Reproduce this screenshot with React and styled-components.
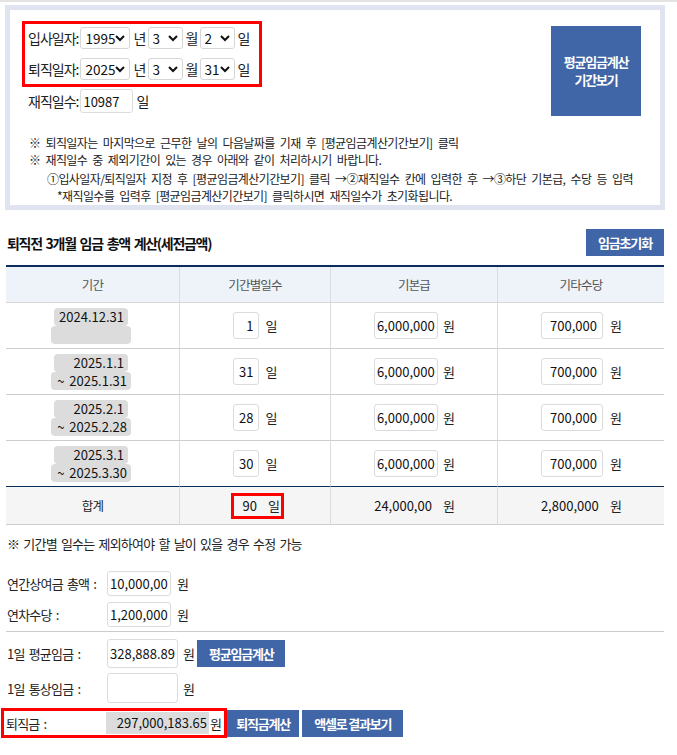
import React from "react";
import styled, { createGlobalStyle } from "styled-components";

const GlobalStyle = createGlobalStyle`
  body {
    margin: 0;
    background: #fff;
    color: #222;
    font-family: "Noto Sans CJK KR", "Noto Sans", sans-serif;
    font-size: 12px;
    letter-spacing: -0.8px;
    word-spacing: 2px;
  }
  input, select, button {
    font-family: inherit;
  }
`;

const Page = styled.div`
  width: 677px;
  box-sizing: border-box;
  border-top: 2px solid #e3e3e3;
  padding: 3px 13px 0 6px;
`;

const TopBox = styled.div`
  margin: 0 -1px;
  height: 205px;
  box-sizing: border-box;
  border: 5px solid #e0e4f1;
  padding: 11px 19px 0 12px;
  display: grid;
  grid-template-columns: 1fr auto;
  align-items: start;
`;

const LeftCol = styled.div`
  display: flex;
  flex-direction: column;
`;

const RedFrame = styled.div`
  align-self: flex-start;
  display: flex;
  flex-direction: column;
  gap: 9px;
  border: 3px solid #ff0000;
  padding: 3px 7px 4px 3px;
`;

const FormRow = styled.div`
  display: flex;
  align-items: center;
  height: ${(p) => p.$h || 22}px;
`;

const TopLabel = styled.span`
  font-size: 14px;
  letter-spacing: -1px;
  margin-right: 2px;
`;

const Unit = styled.span`
  font-size: 14px;
  margin: 0 2px 0 3px;
`;

const SelectWrap = styled.span`
  position: relative;
  display: inline-block;
`;

const Select = styled.select`
  appearance: none;
  width: ${(p) => p.$w}px;
  height: 22px;
  box-sizing: border-box;
  border: 1px solid #d6d6d6;
  border-radius: 3px;
  background: #fff;
  padding: 0 0 0 4px;
  font-size: 13.5px;
  letter-spacing: 0;
  color: #111;
`;

const Chevron = styled.svg`
  position: absolute;
  right: 5px;
  top: 8px;
  pointer-events: none;
`;

const StayRow = styled(FormRow)`
  margin-top: 2px;
  padding-left: 6px;
`;

const Input = styled.input`
  width: ${(p) => p.$w}px;
  height: ${(p) => p.$h || 27}px;
  box-sizing: border-box;
  border: 1px solid #dcdcdc;
  border-radius: 3px;
  background: #fff;
  padding: 0 ${(p) => (p.$right ? 5 : 2)}px 0 2px;
  text-align: ${(p) => (p.$right ? "right" : "left")};
  font-size: 13px;
  letter-spacing: 0;
  color: #111;
  outline: none;
`;

const BigButton = styled.button`
  width: 90px;
  height: 90px;
  margin-top: 5px;
  border: none;
  background: #4166a7;
  color: #fff;
  font-size: 13px;
  font-weight: 700;
  letter-spacing: -1.2px;
  line-height: 18px;
`;

const Notes = styled.div`
  grid-column: 1 / -1;
  margin-top: 16px;
  padding-left: 7px;
  font-size: 12px;
  letter-spacing: -0.6px;
  word-spacing: 3px;
  line-height: 17px;
`;

const NoteLine = styled.div`
  padding-left: ${(p) => p.$indent || 0}px;
  margin-top: ${(p) => p.$gap || 0}px;
  white-space: nowrap;
`;

const TitleRow = styled.div`
  margin-top: 19px;
  height: 27px;
  display: flex;
  align-items: center;
  justify-content: space-between;
`;

const Title = styled.h3`
  margin: 0 0 0 1px;
  font-size: 14px;
  font-weight: 700;
  letter-spacing: -1.3px;
  color: #111;
`;

const BlueButton = styled.button`
  height: 27px;
  width: ${(p) => p.$w}px;
  margin-left: ${(p) => p.$ml || 0}px;
  border: none;
  background: #4166a7;
  color: #fff;
  font-size: 13px;
  font-weight: 700;
  letter-spacing: -1.2px;
  padding: 0;
`;

const Table = styled.table`
  width: 658px;
  margin-top: 9px;
  table-layout: fixed;
  border-collapse: separate;
  border-spacing: 0;
  border-top: 2px solid #0b2d5b;
`;

const Th = styled.th`
  height: 35px;
  padding: 0;
  background: #eef2f9;
  color: #555;
  font-size: 12.5px;
  font-weight: 400;
  border-bottom: 1px solid #d8d8d8;
  border-left: ${(p) => (p.$first ? "none" : "1px solid #dcdcdc")};
`;

const Td = styled.td`
  height: ${(p) => (p.$total ? 37 : 45)}px;
  padding: 0;
  text-align: center;
  vertical-align: middle;
  background: ${(p) => (p.$total ? "#f5f5f5" : "#fff")};
  border-bottom: 1px solid ${(p) => (p.$navy ? "#0b2d5b" : "#cdcdcd")};
  border-left: ${(p) => (p.$first ? "none" : "1px solid #dcdcdc")};
  font-size: 12.5px;
`;

const PeriodStack = styled.div`
  display: flex;
  flex-direction: column;
  align-items: center;
  margin-left: -3px;
`;

const PeriodChip = styled.div`
  width: ${(p) => p.$w}px;
  height: 18px;
  box-sizing: border-box;
  background: #dcdcdc;
  border-radius: 4px;
  padding-right: 4px;
  text-align: right;
  font-size: 13px;
  letter-spacing: 0;
  line-height: 18px;
  color: #111;
`;

const CellGroup = styled.div`
  display: inline-flex;
  align-items: center;
`;

const CellUnit = styled.span`
  font-size: 13px;
  margin-left: ${(p) => p.$ml || 6}px;
`;

const TotalValue = styled.span`
  width: ${(p) => p.$w}px;
  box-sizing: border-box;
  padding-right: 6px;
  text-align: right;
  font-size: 13px;
  letter-spacing: 0;
  color: #111;
`;

const RedDays = styled.div`
  display: inline-flex;
  align-items: center;
  height: 26px;
  box-sizing: border-box;
  margin-left: 5px;
  border: 3px solid #ff0000;
  padding-right: 2px;
`;

const TableNote = styled.p`
  margin: 10px 0 0 1px;
  font-size: 13px;
  line-height: 18px;
`;

const Fields = styled.div`
  margin-top: 18px;
  display: flex;
  flex-direction: column;
  gap: ${(p) => p.$gap || 6}px;
`;

const FieldRow = styled.div`
  display: flex;
  align-items: center;
  height: ${(p) => p.$h || 25}px;
  padding-left: 1px;
`;

const FieldLabel = styled.span`
  width: 100px;
  flex: none;
  font-size: 13px;
`;

const FieldUnit = styled.span`
  font-size: 13px;
  margin-left: ${(p) => p.$ml || 6}px;
`;

const Divider = styled.hr`
  margin: 4px 0;
  border: none;
  border-top: 1px solid #cccccc;
`;

const RedWrap = styled.div`
  display: flex;
  align-items: center;
  height: 30px;
  box-sizing: border-box;
  margin-left: -6px;
  border: 3px solid #ff0000;
  padding: 0 3px 0 2px;
`;

const ResultBox = styled.span`
  width: 103px;
  height: 22px;
  box-sizing: border-box;
  background: #dcdcdc;
  padding-right: 2px;
  text-align: right;
  font-size: 13px;
  line-height: 22px;
  letter-spacing: 0;
  color: #111;
`;

function DateSelect({ w, value }) {
  return (
    <SelectWrap>
      <Select $w={w} defaultValue={value}>
        <option value={value}>{value}</option>
      </Select>
      <Chevron width="10" height="7" viewBox="0 0 10 7">
        <polyline points="1,1 5,5 9,1" fill="none" stroke="#111" strokeWidth="2" />
      </Chevron>
    </SelectWrap>
  );
}

function DateRow({ label, y, m, d }) {
  return (
    <FormRow>
      <TopLabel>{label}</TopLabel>
      <DateSelect w={50} value={y} />
      <Unit>년</Unit>
      <DateSelect w={35} value={m} />
      <Unit>월</Unit>
      <DateSelect w={35} value={d} />
      <Unit>일</Unit>
    </FormRow>
  );
}

const rows = [
  { from: "2024.12.31", to: "", days: "1" },
  { from: "2025.1.1", to: "~ 2025.1.31", days: "31" },
  { from: "2025.2.1", to: "~ 2025.2.28", days: "28" },
  { from: "2025.3.1", to: "~ 2025.3.30", days: "30" },
];

export default function App() {
  return (
    <Page>
      <GlobalStyle />
      <TopBox>
        <LeftCol>
          <RedFrame>
            <DateRow label="입사일자:" y="1995" m="3" d="2" />
            <DateRow label="퇴직일자:" y="2025" m="3" d="31" />
          </RedFrame>
          <StayRow $h={24}>
            <TopLabel>재직일수:</TopLabel>
            <Input $w={53} $h={24} defaultValue="10987" />
            <Unit>일</Unit>
          </StayRow>
        </LeftCol>
        <BigButton>
          평균임금계산
          <br />
          기간보기
        </BigButton>
        <Notes>
          <NoteLine>※ 퇴직일자는 마지막으로 근무한 날의 다음날짜를 기재 후 [평균임금계산기간보기] 클릭</NoteLine>
          <NoteLine>※ 재직일수 중 제외기간이 있는 경우 아래와 같이 처리하시기 바랍니다.</NoteLine>
          <NoteLine $indent={18} $gap={2}>
            ①입사일자/퇴직일자 지정 후 [평균임금계산기간보기] 클릭 →②재직일수 칸에 입력한 후 →③하단 기본급, 수당 등 입력
          </NoteLine>
          <NoteLine $indent={28}>*재직일수를 입력후 [평균임금계산기간보기] 클릭하시면 재직일수가 초기화됩니다.</NoteLine>
        </Notes>
      </TopBox>

      <TitleRow>
        <Title>퇴직전 3개월 임금 총액 계산(세전금액)</Title>
        <BlueButton $w={78}>임금초기화</BlueButton>
      </TitleRow>

      <Table>
        <colgroup>
          <col style={{ width: 173 }} />
          <col style={{ width: 151 }} />
          <col style={{ width: 167 }} />
          <col style={{ width: 167 }} />
        </colgroup>
        <thead>
          <tr>
            <Th $first>기간</Th>
            <Th>기간별일수</Th>
            <Th>기본급</Th>
            <Th>기타수당</Th>
          </tr>
        </thead>
        <tbody>
          {rows.map((r, i) => {
            const navy = i === rows.length - 1;
            return (
              <tr key={r.from}>
                <Td $first $navy={navy}>
                  <PeriodStack>
                    <PeriodChip $w={74}>{r.from}</PeriodChip>
                    <PeriodChip $w={80}>{r.to}</PeriodChip>
                  </PeriodStack>
                </Td>
                <Td $navy={navy}>
                  <CellGroup>
                    <Input $w={26} $right defaultValue={r.days} />
                    <CellUnit>일</CellUnit>
                  </CellGroup>
                </Td>
                <Td $navy={navy}>
                  <CellGroup>
                    <Input $w={64} defaultValue="6,000,000" />
                    <CellUnit $ml={5}>원</CellUnit>
                  </CellGroup>
                </Td>
                <Td $navy={navy}>
                  <CellGroup>
                    <Input $w={62} $right defaultValue="700,000" />
                    <CellUnit $ml={7}>원</CellUnit>
                  </CellGroup>
                </Td>
              </tr>
            );
          })}
          <tr>
            <Td $first $total>합계</Td>
            <Td $total>
              <RedDays>
                <TotalValue $w={29}>90</TotalValue>
                <CellUnit $ml={5}>일</CellUnit>
              </RedDays>
            </Td>
            <Td $total>
              <CellGroup>
                <TotalValue $w={64}>24,000,00</TotalValue>
                <CellUnit $ml={5}>원</CellUnit>
              </CellGroup>
            </Td>
            <Td $total>
              <CellGroup>
                <TotalValue $w={62}>2,800,000</TotalValue>
                <CellUnit $ml={7}>원</CellUnit>
              </CellGroup>
            </Td>
          </tr>
        </tbody>
      </Table>

      <TableNote>※ 기간별 일수는 제외하여야 할 날이 있을 경우 수정 가능</TableNote>

      <Fields>
        <FieldRow>
          <FieldLabel>연간상여금 총액 :</FieldLabel>
          <Input $w={64} $h={25} defaultValue="10,000,00" />
          <FieldUnit>원</FieldUnit>
        </FieldRow>
        <FieldRow>
          <FieldLabel>연차수당 :</FieldLabel>
          <Input $w={64} $h={25} defaultValue="1,200,000" />
          <FieldUnit>원</FieldUnit>
        </FieldRow>
      </Fields>

      <Divider />

      <Fields $gap={5} style={{ marginTop: 6 }}>
        <FieldRow $h={30}>
          <FieldLabel>1일 평균임금 :</FieldLabel>
          <Input $w={71} $h={29} defaultValue="328,888.89" />
          <FieldUnit $ml={5}>원</FieldUnit>
          <BlueButton $w={88} $ml={3}>평균임금계산</BlueButton>
        </FieldRow>
        <FieldRow $h={30}>
          <FieldLabel>1일 통상임금 :</FieldLabel>
          <Input $w={71} $h={30} defaultValue="" />
          <FieldUnit $ml={5}>원</FieldUnit>
        </FieldRow>
        <FieldRow $h={30}>
          <RedWrap>
            <FieldLabel>퇴직금 :</FieldLabel>
            <ResultBox>297,000,183.65</ResultBox>
            <FieldUnit $ml={1}>원</FieldUnit>
          </RedWrap>
          <BlueButton $w={72}>퇴직금계산</BlueButton>
          <BlueButton $w={101} $ml={3}>액셀로 결과보기</BlueButton>
        </FieldRow>
      </Fields>
    </Page>
  );
}
